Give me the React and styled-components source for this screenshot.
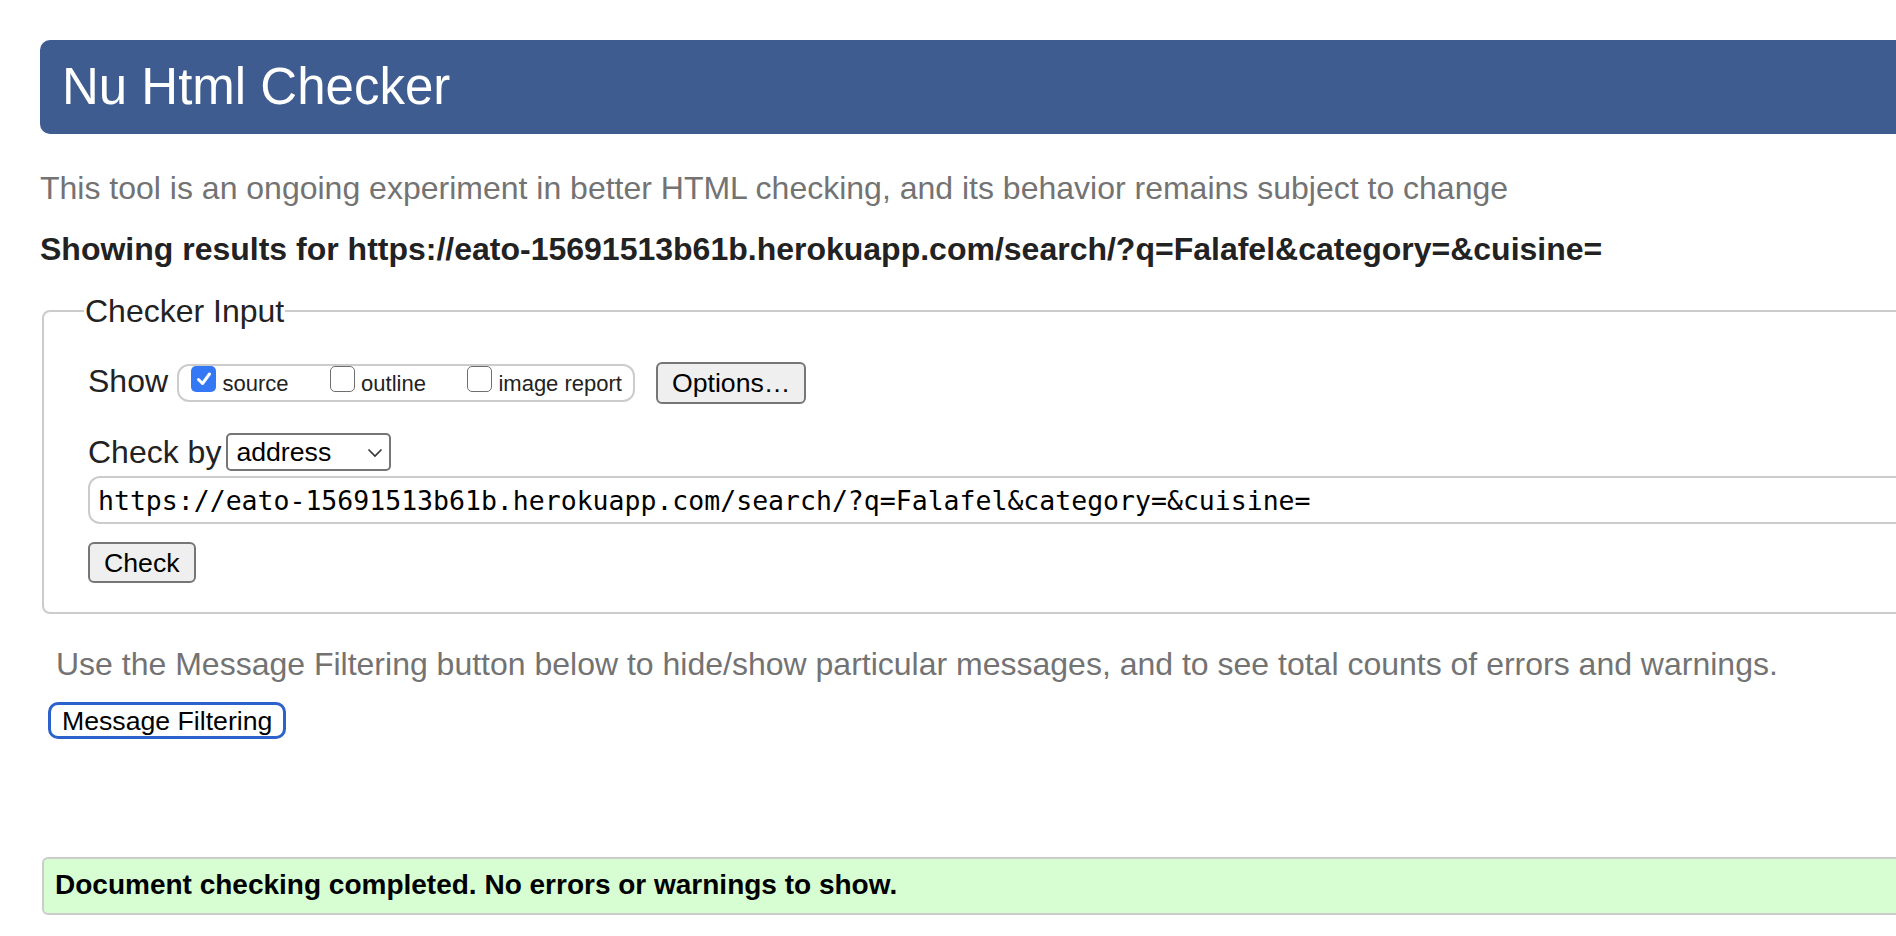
import React from "react";
import styled, { createGlobalStyle } from "styled-components";

const GlobalStyle = createGlobalStyle`
  html, body {
    margin: 0;
    padding: 0;
    background: #fff;
    overflow: hidden;
  }
  body {
    font-family: "Liberation Sans", Arial, Helvetica, sans-serif;
    color: #222;
  }
`;

const toggles = [
  { id: "source", label: "source", checked: true },
  { id: "outline", label: "outline", checked: false },
  { id: "image", label: "image report", checked: false },
];

const URL = "https://eato-15691513b61b.herokuapp.com/search/?q=Falafel&category=&cuisine=";

const App = () => {
  return (
    <Page>
      <GlobalStyle />
      <Title>Nu Html Checker</Title>
      <Intro>
        This tool is an ongoing experiment in better HTML checking, and its behavior remains subject to change
      </Intro>
      <ResultsFor>Showing results for {URL}</ResultsFor>

      <Fieldset>
        <Legend>Checker Input</Legend>

        <ShowRow>
          <Label>Show</Label>
          <ToggleGroup>
            {toggles.map((t) => (
              <Toggle key={t.id}>
                <Tick $checked={t.checked}>
                  {t.checked && (
                    <svg width="18" height="18" viewBox="0 0 18 18">
                      <path
                        d="M3.5 9.5 L7.5 13.5 L14.5 4"
                        fill="none"
                        stroke="#fff"
                        strokeWidth="3"
                        strokeLinecap="round"
                        strokeLinejoin="round"
                      />
                    </svg>
                  )}
                </Tick>
                <ToggleText>{t.label}</ToggleText>
              </Toggle>
            ))}
          </ToggleGroup>
          <OptionsButton type="button">Options…</OptionsButton>
        </ShowRow>

        <ByRow>
          <Label $tall>Check by</Label>
          <SelectWrap>
            <Select defaultValue="address">
              <option value="address">address</option>
              <option value="file">file upload</option>
              <option value="text">text input</option>
            </Select>
            <Chevron width="16" height="10" viewBox="0 0 16 10">
              <path d="M1.5 1.5 L8 8 L14.5 1.5" fill="none" stroke="#333" strokeWidth="1.6" />
            </Chevron>
          </SelectWrap>
        </ByRow>

        <UrlInput type="text" defaultValue={URL} />

        <CheckButton type="button">Check</CheckButton>
      </Fieldset>

      <FilterHint>
        Use the Message Filtering button below to hide/show particular messages, and to see total counts of errors and warnings.
      </FilterHint>
      <FilterButton type="button">Message Filtering</FilterButton>

      <Success>Document checking completed. No errors or warnings to show.</Success>
    </Page>
  );
};

// --- Styled Components ---

const Page = styled.div`
  width: 1960px;
  padding: 40px 0 0 40px;
`;

const Title = styled.h1`
  margin: 0;
  height: 94px;
  padding-left: 22px;
  background: #3e5c8f;
  color: #fff;
  border-radius: 10px;
  font-size: 51px;
  font-weight: 400;
  line-height: 94px;
`;

const Intro = styled.p`
  margin: 34px 0 0;
  font-size: 32px;
  line-height: 40px;
  color: #737373;
`;

const ResultsFor = styled.p`
  margin: 21px 0 0;
  font-size: 32px;
  font-weight: 700;
  line-height: 40px;
  color: #222;
`;

const Fieldset = styled.fieldset`
  margin: 24px 0 0 2px;
  padding: 33px 0 29px 44px;
  border: 2px solid #ccc;
  border-radius: 8px;
  min-width: 0;
`;

const Legend = styled.legend`
  margin-left: -4px;
  padding: 0 1px;
  font-size: 32px;
  line-height: 36px;
  color: #222;
`;

const ShowRow = styled.div`
  display: flex;
  align-items: center;
  height: 42px;
`;

const Label = styled.span`
  font-size: 32px;
  line-height: 37px;
  color: #222;
  margin-bottom: ${(p) => (p.$tall ? "0" : "4px")};
`;

const ToggleGroup = styled.div`
  display: flex;
  align-items: flex-start;
  gap: 41px;
  box-sizing: border-box;
  height: 38px;
  margin-left: 9px;
  padding: 0 11px 0 12px;
  border: 2px solid #ccc;
  border-radius: 12px;
`;

const Toggle = styled.label`
  display: flex;
  align-items: flex-start;
  gap: 6.5px;
`;

const Tick = styled.span`
  display: flex;
  align-items: center;
  justify-content: center;
  box-sizing: border-box;
  width: 25px;
  height: 26px;
  border-radius: 5px;
  border: ${(p) => (p.$checked ? "none" : "1.5px solid #6f6f6f")};
  background: ${(p) => (p.$checked ? "#3478f6" : "#fff")};
`;

const ToggleText = styled.span`
  margin-top: 5px;
  font-size: 22px;
  line-height: 26px;
  color: #222;
`;

const NativeButton = styled.button`
  box-sizing: border-box;
  border: 2px solid #767676;
  border-radius: 6px;
  background: #efefef;
  color: #000;
  font-family: "Liberation Sans", Arial, sans-serif;
  font-size: 26.67px;
  line-height: 30px;
  cursor: pointer;
`;

const OptionsButton = styled(NativeButton)`
  height: 42px;
  margin-left: 21px;
  padding: 0 14px;
`;

const ByRow = styled.div`
  display: flex;
  align-items: center;
  gap: 5px;
  margin-top: 29px;
`;

const SelectWrap = styled.div`
  position: relative;
  width: 165px;
  height: 38px;
`;

const Select = styled.select`
  appearance: none;
  box-sizing: border-box;
  width: 100%;
  height: 100%;
  padding: 0 0 0 8px;
  border: 2px solid #767676;
  border-radius: 5px;
  background: #fff;
  color: #000;
  font-family: "Liberation Sans", Arial, sans-serif;
  font-size: 26.67px;
  outline: none;
`;

const Chevron = styled.svg`
  position: absolute;
  right: 8px;
  top: 15px;
  pointer-events: none;
`;

const UrlInput = styled.input`
  display: block;
  box-sizing: border-box;
  width: 1900px;
  height: 48px;
  margin-top: 5px;
  padding: 0 8px;
  border: 2px solid #ccc;
  border-radius: 12px;
  color: #000;
  font-family: "DejaVu Sans Mono", "Liberation Mono", monospace;
  font-size: 26.5px;
  outline: none;
`;

const CheckButton = styled(NativeButton)`
  display: block;
  height: 41px;
  margin-top: 18px;
  padding: 0 14px;
`;

const FilterHint = styled.p`
  margin: 30px 0 0 16px;
  font-size: 32px;
  line-height: 40px;
  color: #737373;
`;

const FilterButton = styled.button`
  display: block;
  box-sizing: border-box;
  height: 37px;
  margin: 18px 0 0 8px;
  padding: 0 11px;
  border: 3px solid #2b62cc;
  border-radius: 10px;
  background: #fff;
  color: #000;
  font-family: "Liberation Sans", Arial, sans-serif;
  font-size: 26.67px;
  line-height: 30px;
  cursor: pointer;
`;

const Success = styled.div`
  margin: 118px 0 0 2px;
  padding: 8px 11px 10px;
  border: 2px solid #ccc;
  border-radius: 6px;
  background: #d7fdd2;
  color: #000;
  font-size: 28px;
  font-weight: 700;
  line-height: 36px;
`;

export default App;
